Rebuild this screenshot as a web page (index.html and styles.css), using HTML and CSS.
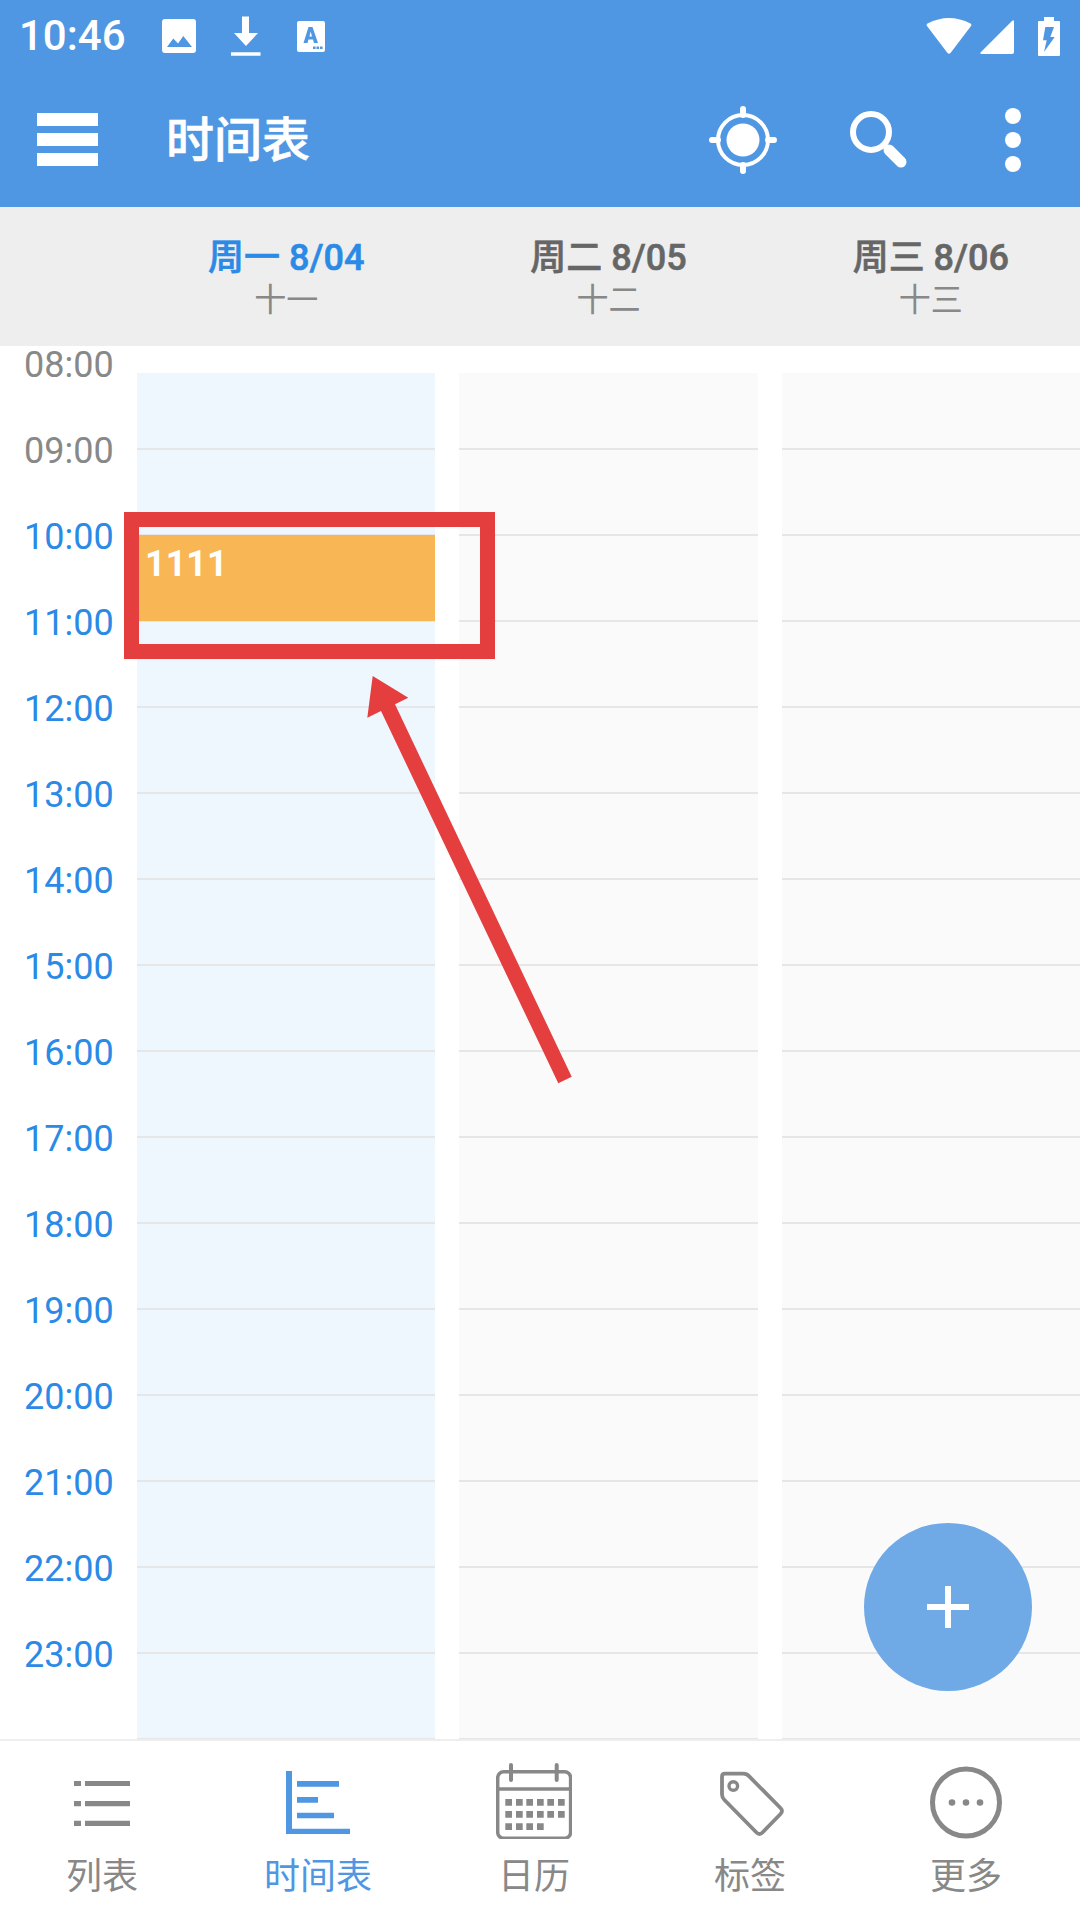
FILE: index.html
```html
<!DOCTYPE html>
<html lang="zh-CN">
<head>
<meta charset="utf-8">
<title>时间表</title>
<link rel="stylesheet" href="styles.css">
</head>
<body>
<div class="app">
  <header class="topbar">
    <div class="status">
      <span class="clock">10:46</span>
      <svg class="st st-img" viewBox="0 0 34 34"><path fill="#fff" fill-rule="evenodd" d="M3 0h28a3 3 0 0 1 3 3v28a3 3 0 0 1-3 3H3a3 3 0 0 1-3-3V3a3 3 0 0 1 3-3zM5 28h25L21.300 17 16 24.500l-4.700-5z"/></svg>
      <svg class="st st-dl" viewBox="0 0 30 40"><path fill="#fff" d="M11 .5h7V17h9L15 30 3 17h8zM0 36.300h29.500v3.500H0z"/></svg>
      <svg class="st st-a" viewBox="0 0 28 31"><path fill="#fff" fill-rule="evenodd" d="M2 0h24a2 2 0 0 1 2 2v27a2 2 0 0 1-2 2H2a2 2 0 0 1-2-2V2a2 2 0 0 1 2-2zM11.500 6L6.500 22h4l1-3.500h4.500l1 3.500h4L15.500 6zM13.700 10.500l1.300 5h-2.600zM16 25.500h2.600v2.500H16zM19.500 25.500h2.600v2.500h-2.600zM23 25.500h2.600v2.500H23z"/></svg>
      <span class="spacer"></span>
      <svg class="st st-wifi" viewBox="0 0 46 37"><path fill="#fff" d="M1.500 5.500Q23-5.500 44.500 5.500q1.500 1 .5 2.500L24.500 35q-1.500 1.500-3 0L1 8q-1-1.500.5-2.500z"/></svg>
      <svg class="st st-sig" viewBox="0 0 34 34"><path fill="#fff" d="M32 1q2-2 2 1v30q0 2-2 2H2q-3 0-1-2z"/></svg>
      <svg class="st st-bat" viewBox="0 0 22 39"><path fill="#fff" fill-rule="evenodd" d="M6 0h10v4h5a1 1 0 0 1 1 1v33a1 1 0 0 1-1 1H1a1 1 0 0 1-1-1V5a1 1 0 0 1 1-1h5zM7.300 10L5 23.300h3.700L6 35l10.700-15h-4.400L16 10z"/></svg>
    </div>
    <div class="toolbar">
      <svg class="tb tb-menu" viewBox="0 0 61 53"><path fill="#fff" d="M0 0h61v13H0zM0 20h61v13H0zM0 40h61v13H0z"/></svg>
      <span class="title">时间表</span>
      <span class="spacer"></span>
      <svg class="tb tb-target" viewBox="0 0 68 68"><circle cx="34" cy="34" r="25" fill="none" stroke="#fff" stroke-width="4"/><circle cx="34" cy="34" r="16.500" fill="#fff"/><path stroke="#fff" stroke-width="6" stroke-linecap="round" d="M34 3v6M34 59v6M3 34h6M59 34h6"/></svg>
      <svg class="tb tb-search" viewBox="0 0 58 58"><circle cx="21" cy="21" r="18" fill="none" stroke="#fff" stroke-width="6"/><path stroke="#fff" stroke-width="5" d="M33 33l5 5"/><path stroke="#fff" stroke-width="11" stroke-linecap="round" d="M39 39l12 12"/></svg>
      <svg class="tb tb-dots" viewBox="0 0 16 64"><circle cx="8" cy="8" r="8" fill="#fff"/><circle cx="8" cy="32" r="8" fill="#fff"/><circle cx="8" cy="56" r="8" fill="#fff"/></svg>
    </div>
  </header>

  <div class="days">
    <div class="day today"><div class="day-main">周一 8/04</div><div class="day-sub">十一</div></div>
    <div class="day"><div class="day-main">周二 8/05</div><div class="day-sub">十二</div></div>
    <div class="day"><div class="day-main">周三 8/06</div><div class="day-sub">十三</div></div>
  </div>

  <main class="schedule">
    <div class="hours">
      <div class="hour past">08:00</div><div class="hour past">09:00</div>
      <div class="hour">10:00</div><div class="hour">11:00</div><div class="hour">12:00</div>
      <div class="hour">13:00</div><div class="hour">14:00</div><div class="hour">15:00</div>
      <div class="hour">16:00</div><div class="hour">17:00</div><div class="hour">18:00</div>
      <div class="hour">19:00</div><div class="hour">20:00</div><div class="hour">21:00</div>
      <div class="hour">22:00</div><div class="hour">23:00</div>
    </div>
    <div class="col col-today"><div class="event">1111</div></div>
    <div class="col"></div>
    <div class="col"></div>

    <div class="mark-box"></div>
    <svg class="mark-arrow" viewBox="0 0 240 440"><path fill="#e53e3e" d="M22.700 16L58.300 37.700 45 44.300 221.700 416.700 208.300 423.300 31 51 17.300 57.700z"/></svg>
    <button class="fab" type="button"><svg viewBox="0 0 42 42"><path fill="#fff" d="M18 0h6v18h18v6H24v18h-6V24H0v-6h18z"/></svg></button>
  </main>

  <nav class="nav">
    <div class="tab">
      <svg class="ico" viewBox="0 0 76 76"><path fill="#888" d="M10 18h7v5h-7zM21 18h45v5H21zM10 38h7v5.300h-7zM21 38h45v5.300H21zM10 57.700h7V63h-7zM21 57.700h45V63H21z"/></svg>
      <span class="tab-label">列表</span>
    </div>
    <div class="tab active">
      <svg class="ico" viewBox="0 0 76 76"><path fill="#4f97e2" d="M6 8h6v57.700h58V71H6zM17 18h42v5.700H17zM17 34h21v5.700H17zM17 49.700h37v5.600H17z"/></svg>
      <span class="tab-label">时间表</span>
    </div>
    <div class="tab">
      <svg class="ico" viewBox="0 0 76 76"><g fill="none" stroke="#888" stroke-width="3.500"><rect x="1.700" y="8.700" width="72.900" height="66.600" rx="6"/><path d="M2 26h72"/></g><path stroke="#888" stroke-width="4" stroke-linecap="round" d="M15 2v15M60.700 2v15"/><path fill="#888" d="M9.300 36H16v6.700H9.300zM20 36h6.700v6.700H20zM30.300 36H37v6.700h-6.700zM41 36h6.700v6.700H41zM51.300 36H58v6.700h-6.700zM62 36h6.700v6.700H62zM9.300 48H16v6.700H9.300zM20 48h6.700v6.700H20zM30.300 48H37v6.700h-6.700zM41 48h6.700v6.700H41zM51.300 48H58v6.700h-6.700zM62 48h6.700v6.700H62zM9.300 60.300H16V67H9.300zM20 60.300h6.700V67H20zM30.300 60.300H37V67h-6.700zM41 60.300h6.700V67H41z"/></svg>
      <span class="tab-label">日历</span>
    </div>
    <div class="tab">
      <svg class="ico" viewBox="0 0 76 76"><path fill="none" stroke="#888" stroke-width="3.800" stroke-linejoin="round" d="M13 10.700H31q4 0 6 2.500L68.500 45q3 3 0 6L50.500 69.500q-3 3-6 0L12.500 37q-2.500-2.500-2.500-5.500V13.700q0-3 3-3z"/><circle cx="21.300" cy="23" r="4.300" fill="none" stroke="#888" stroke-width="3.400"/></svg>
      <span class="tab-label">标签</span>
    </div>
    <div class="tab">
      <svg class="ico" viewBox="0 0 76 76"><circle cx="38" cy="39.500" r="33.500" fill="none" stroke="#888" stroke-width="5"/><circle cx="24" cy="39.500" r="3.300" fill="#888"/><circle cx="38" cy="39.500" r="3.300" fill="#888"/><circle cx="52" cy="39.500" r="3.300" fill="#888"/></svg>
      <span class="tab-label">更多</span>
    </div>
  </nav>
</div>
</body>
</html>
```
FILE: styles.css
```css
* { box-sizing: border-box; }
html, body { margin: 0; padding: 0; }
body {
  width: 1080px;
  height: 1920px;
  overflow: hidden;
  background: #fff;
  font-family: Roboto, "Noto Sans CJK SC", sans-serif;
}
.app { display: flex; flex-direction: column; width: 1080px; height: 1920px; }
.spacer { flex: 1; }

.topbar { height: 207px; background: #4f97e2; flex: none; color: #fff; }
.status { height: 72px; display: flex; align-items: center; padding: 0 20px 0 19px; }
.clock { font-size: 42px; font-weight: 500; line-height: 72px; width: 143px; }
.st { display: block; flex: none; }
.st-img { width: 34px; height: 34px; }
.st-dl { width: 30px; height: 40px; margin-left: 35px; }
.st-a { width: 28px; height: 31px; margin-left: 36px; }
.st-wifi { width: 46px; height: 37px; }
.st-sig { width: 34px; height: 34px; margin-left: 8px; margin-top: 2px; }
.st-bat { width: 22px; height: 39px; margin-left: 24px; }

.toolbar { height: 135px; display: flex; align-items: center; padding: 0 59px 0 37px; }
.tb { display: block; flex: none; }
.tb-menu { width: 61px; height: 53px; }
.title { font-size: 48px; font-weight: 500; -webkit-text-stroke: 0.6px #fff; margin: 2px 0 0 68px; line-height: 64px; }
.tb-target { width: 68px; height: 68px; }
.tb-search { width: 58px; height: 58px; margin-left: 73px; }
.tb-dots { width: 16px; height: 64px; margin-left: 97px; }

.days {
  height: 139px;
  flex: none;
  background: #eee;
  display: grid;
  grid-template-columns: repeat(3, 1fr);
  column-gap: 24px;
  padding-left: 137px;
  text-align: center;
}
.day { padding-top: 28px; }
.day-main { font-size: 36px; line-height: 46px; font-weight: 500; -webkit-text-stroke: 0.6px currentColor; color: #666; }
.day-sub { font-size: 32px; line-height: 38px; color: #888; }
.today .day-main { color: #2b8ae6; }

.schedule {
  position: relative;
  flex: 1;
  display: grid;
  grid-template-columns: repeat(3, 1fr);
  column-gap: 24px;
  padding: 27px 0 0 137px;
  background: #fff;
}
.col {
  background-color: #fafafa;
  background-image: linear-gradient(to bottom, transparent 0, transparent 84px, #e6e6e6 84px, #e6e6e6 86px);
  background-size: 100% 86px;
  background-position: 0 -9px;
  position: relative;
}
.col-today { background-color: #eef6fe; }
.event {
  position: absolute;
  left: 2px;
  right: 0;
  top: 162px;
  height: 86px;
  background: #f9b654;
  color: #fff;
  font-size: 36px;
  font-weight: 700;
  line-height: 40px;
  padding: 9px 0 0 6px;
}
.hours {
  position: absolute;
  left: 0;
  top: 1px;
  width: 137px;
}
.hour {
  height: 86px;
  line-height: 36px;
  font-size: 36px;
  color: #2b8ae6;
  padding-left: 24px;
}
.hour.past { color: #888; }

.mark-box {
  position: absolute;
  left: 124px;
  top: 166px;
  width: 371px;
  height: 147px;
  border: 15px solid #e53e3e;
}
.mark-arrow {
  position: absolute;
  left: 350px;
  top: 314px;
  width: 240px;
  height: 440px;
}
.fab {
  position: absolute;
  left: 864px;
  top: 1177px;
  width: 168px;
  height: 168px;
  border: 0;
  padding: 0;
  border-radius: 50%;
  background: #6fa9e6;
  display: flex;
  align-items: center;
  justify-content: center;
}
.fab svg { width: 42px; height: 42px; display: block; }

.nav {
  height: 181px;
  flex: none;
  width: 1080px;
  margin-left: -6px;
  background: #fff;
  display: grid;
  grid-template-columns: repeat(5, 216px);
  position: relative;
}
.nav::before {
  content: "";
  position: absolute;
  left: 0;
  right: -6px;
  top: 0;
  height: 2px;
  background: #eee;
}
.tab {
  display: flex;
  flex-direction: column;
  align-items: center;
  color: #888;
  padding-top: 24px;
}
.tab.active { color: #4f97e2; }
.ico { width: 76px; height: 76px; display: block; flex: none; }
.tab-label { font-size: 36px; line-height: 46px; margin-top: 15px; }
```
